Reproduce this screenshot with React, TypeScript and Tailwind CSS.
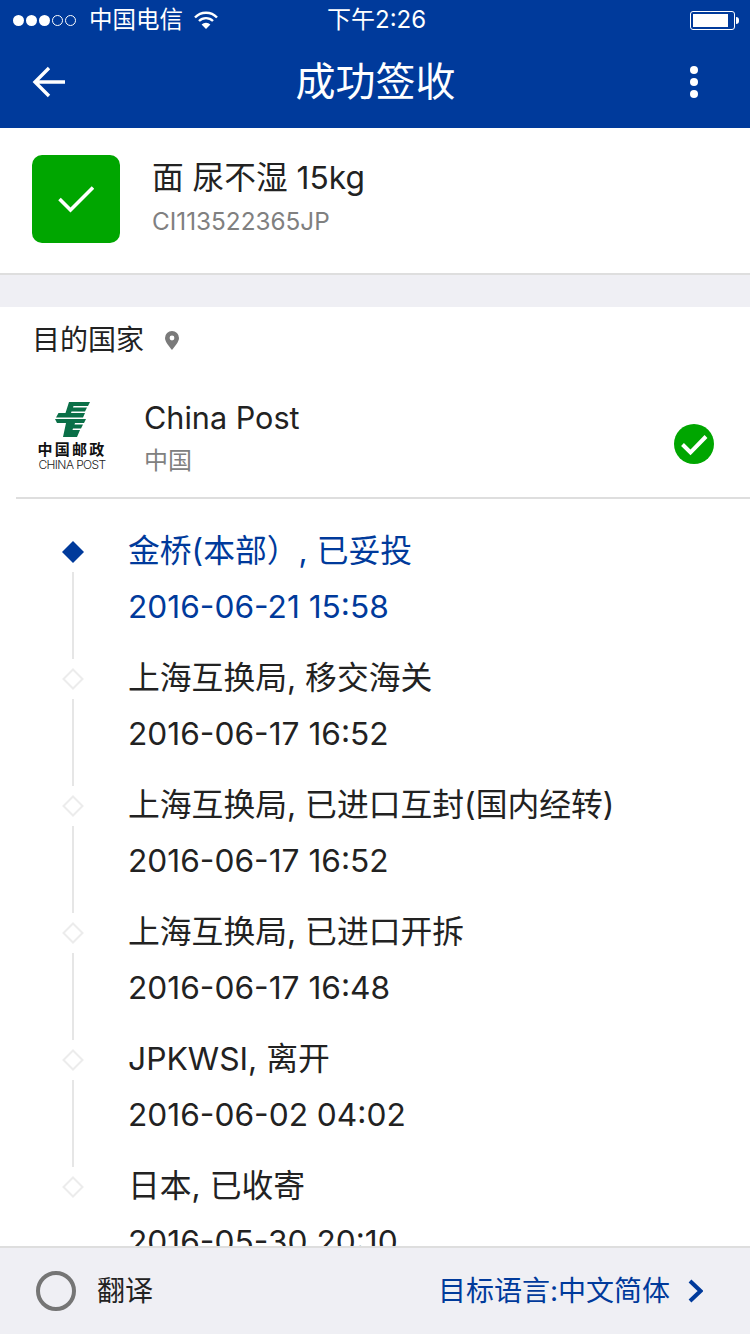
const events = [
  { title: "金桥(本部）, 已妥投", time: "2016-06-21 15:58", active: true },
  { title: "上海互换局, 移交海关", time: "2016-06-17 16:52" },
  { title: "上海互换局, 已进口互封(国内经转)", time: "2016-06-17 16:52" },
  { title: "上海互换局, 已进口开拆", time: "2016-06-17 16:48" },
  { title: "JPKWSI, 离开", time: "2016-06-02 04:02" },
  { title: "日本, 已收寄", time: "2016-05-30 20:10", last: true },
];

function StatusBar() {
  return (
    <div className="relative flex h-10 items-center pl-[13px] pr-[11px] text-white">
      <div className="flex items-center gap-[2px]">
        <span className="h-[11px] w-[11px] rounded-full bg-white" />
        <span className="h-[11px] w-[11px] rounded-full bg-white" />
        <span className="h-[11px] w-[11px] rounded-full bg-white" />
        <span className="h-[11px] w-[11px] rounded-full border border-white" />
        <span className="h-[11px] w-[11px] rounded-full border border-white" />
      </div>
      <span className="ml-[13px] text-[23.5px] leading-none">中国电信</span>
      <svg className="ml-[10px]" width="26" height="20" viewBox="0 0 26 20" fill="none" stroke="white" strokeWidth="2.4">
        <path d="M2 7.5 A15 15 0 0 1 24 7.5" />
        <path d="M6 11 A10 10 0 0 1 20 11" />
        <path d="M13 19 L8.6 14.4 A6.4 6.4 0 0 1 17.4 14.4 Z" fill="white" stroke="none" />
      </svg>
      <span className="absolute left-[327px] top-[6px] text-[24px] leading-[28px]">下午2:26</span>
      <div className="ml-auto flex items-center">
        <div className="h-[19px] w-[45px] rounded-[3px] border border-white p-[2px]">
          <div className="h-full w-[35px] bg-white" />
        </div>
        <div className="ml-[1px] h-[7px] w-[3px] rounded-r-sm bg-white" />
      </div>
    </div>
  );
}

function Logo() {
  return (
    <div className="flex w-[70px] flex-col items-center">
      <svg width="36" height="35" viewBox="0 0 36 35" fill="#0a6f47">
        <path d="M15 0 H36 L34 4 H19.5 L19 5.5 H33 L31 9.5 H17.5 L17 11 H31 L29 15.5 H2 L4.5 11 H11.5 Z" />
        <path d="M1 17 H32 L30 21 H21 L20.5 22.5 H29 L27 26.5 H19 L18.5 28 H26 L23 35 H9 L12 21 H3 Z" />
      </svg>
      <span className="mt-[5px] text-[15px] font-bold leading-[16px] tracking-[2.3px] text-[#111]">中国邮政</span>
      <span className="text-[12px] font-light leading-[14px] tracking-[-0.6px] text-[#222]">CHINA POST</span>
    </div>
  );
}

export default function App() {
  return (
    <div
      className="flex h-[1334px] w-[750px] flex-col overflow-hidden bg-white text-[#222]"
      style={{ fontFamily: 'Inter, "Noto Sans CJK SC", sans-serif' }}
    >
      <header className="h-32 bg-[#003a9b]">
        <StatusBar />
        <div className="flex h-[84px] items-center pl-8 pr-[52px] text-white">
          <div className="flex flex-1">
            <svg width="34" height="32" viewBox="0 0 34 32" fill="none" stroke="white" strokeWidth="3.4">
              <path d="M33 16 H3 M17 2 L3 16 L17 30" />
            </svg>
          </div>
          <h1 className="ml-[21px] text-[40px] font-normal leading-none">成功签收</h1>
          <div className="flex flex-1 justify-end">
            <div className="flex flex-col gap-[4px]">
              <span className="h-2 w-2 rounded-full bg-white" />
              <span className="h-2 w-2 rounded-full bg-white" />
              <span className="h-2 w-2 rounded-full bg-white" />
            </div>
          </div>
        </div>
      </header>

      <section className="flex h-[147px] shrink-0 border-b-2 border-[#dedede] pl-8 pt-[27px]">
        <div className="flex h-[88px] w-[88px] items-center justify-center rounded-[10px] bg-[#00a600]">
          <svg width="36" height="28" viewBox="0 0 36 28" fill="none" stroke="white" strokeWidth="3.6">
            <path d="M1.5 14 L12.5 25 L35 2.5" />
          </svg>
        </div>
        <div className="ml-[32px] flex flex-col">
          <span className="mt-[3px] text-[31.7px] font-normal leading-[40px]">面 尿不湿 15kg</span>
          <span className="mt-[8px] text-[24.3px] font-normal leading-[30px] text-[#808080]">CI113522365JP</span>
        </div>
      </section>

      <div className="h-8 shrink-0 bg-[#efeff4]" />

      <section className="flex h-[66px] shrink-0 items-center pl-8">
        <span className="text-[28px] font-normal leading-none">目的国家</span>
        <svg className="ml-[21px]" width="14" height="19" viewBox="0 0 14 19" fill="#7a7a7a">
          <path fillRule="evenodd" d="M7 0 A7 7 0 0 1 14 7 C14 11 9.5 15.5 7 19 C4.5 15.5 0 11 0 7 A7 7 0 0 1 7 0 Z M7 4.6 A2.4 2.4 0 1 0 7 9.4 A2.4 2.4 0 1 0 7 4.6 Z" />
        </svg>
      </section>

      <section className="ml-4 flex h-[126px] shrink-0 items-start border-b-2 border-[#dedede] pl-[21px]">
        <div className="mt-[29px]"><Logo /></div>
        <div className="ml-[37px] mt-[25px] flex flex-col">
          <span className="text-[30.6px] font-normal leading-[40px]">China Post</span>
          <span className="mt-[8px] text-[24px] font-normal leading-[30px] text-[#808080]">中国</span>
        </div>
        <svg className="ml-auto mr-[36px] mt-[51px]" width="40" height="40" viewBox="0 0 40 40">
          <circle cx="20" cy="20" r="20" fill="#00a600" />
          <path d="M8.5 20.5 L16.5 28.5 L32 12.5" fill="none" stroke="white" strokeWidth="4" />
        </svg>
      </section>

      <main className="min-h-0 flex-1 overflow-hidden pt-[24px]">
        {events.map((e) => (
          <div key={e.time + e.title} className="flex h-[127px]">
            <div className="flex w-[146px] shrink-0 flex-col items-center">
              <svg className="mt-[17px] shrink-0" width="24" height="24" viewBox="0 0 24 24">
                {e.active ? (
                  <path d="M12 1 L23 12 L12 23 L1 12 Z" fill="#003a9b" />
                ) : (
                  <path d="M12 2.5 L21.5 12 L12 21.5 L2.5 12 Z" fill="white" stroke="#ececec" strokeWidth="2" />
                )}
              </svg>
              {!e.last && <div className="mt-[8px] h-[87px] w-[2px] shrink-0 bg-[#e6e6e6]" />}
            </div>
            <div className={`-ml-[18px] flex flex-col font-normal ${e.active ? "text-[#003a9b]" : ""}`}>
              <span className="text-[31.8px] leading-[55px]">{e.title}</span>
              <span className="text-[31.7px] leading-[57px]">{e.time}</span>
            </div>
          </div>
        ))}
      </main>

      <footer className="flex h-[88px] shrink-0 items-center border-t-2 border-[#dedede] bg-[#efeff4] pl-9 pr-[47px]">
        <div className="h-10 w-10 rounded-full border-4 border-[#757575]" />
        <span className="ml-[21px] text-[28px] font-normal leading-none">翻译</span>
        <span className="ml-auto text-[28px] font-normal leading-none text-[#003a9b]">目标语言:中文简体</span>
        <svg className="ml-[18px]" width="15" height="24" viewBox="0 0 15 24" fill="none" stroke="#003a9b" strokeWidth="4">
          <path d="M2 2 L12.5 12 L2 22" />
        </svg>
      </footer>
    </div>
  );
}
